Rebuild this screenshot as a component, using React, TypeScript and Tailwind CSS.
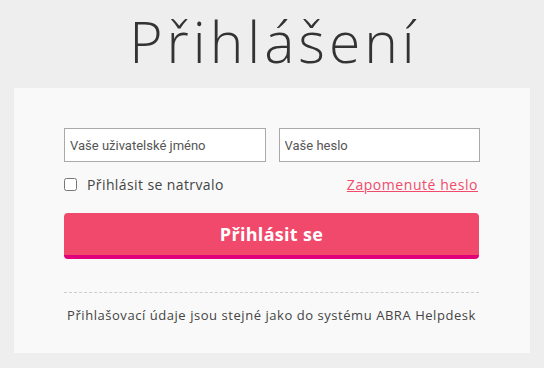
import { useState } from 'react';

export default function App() {
  const [remember, setRemember] = useState(false);

  return (
    <div className="min-h-screen w-full bg-[#eeeeee] font-['Open_Sans',sans-serif]">
      <h1 className="h-[88px] pt-[6px] pl-[4px] text-center text-[57px] font-light leading-[70px] tracking-[4px] text-[#333333]">
        Přihlášení
      </h1>

      <div className="mx-[14px] h-[265px] bg-[#f9f9f9] px-[50px] pt-[40px]">
        <div className="flex gap-[13px]">
          <input
            type="text"
            placeholder="Vaše uživatelské jméno"
            className="h-[34px] w-[202px] border border-[#a9a9a9] bg-white px-[5px] font-['Roboto',sans-serif] text-[13px] text-[#333] placeholder:text-[#555555] outline-none"
          />
          <input
            type="password"
            placeholder="Vaše heslo"
            className="h-[34px] w-[202px] border border-[#a9a9a9] bg-white px-[5px] font-['Roboto',sans-serif] text-[13px] text-[#333] placeholder:text-[#555555] outline-none"
          />
        </div>

        <div className="mt-[12px] flex items-center justify-between pr-[2px]">
          <label className="flex items-center gap-[10px] text-[14px] tracking-[0.4px] text-[#444444]">
            <input
              type="checkbox"
              checked={remember}
              onChange={(e) => setRemember(e.target.checked)}
              className="h-[13px] w-[13px]"
            />
            Přihlásit se natrvalo
          </label>
          <a href="#" className="text-[14px] tracking-[0.55px] text-[#f04b6b] underline">
            Zapomenuté heslo
          </a>
        </div>

        <button className="mt-[18px] h-[46px] w-[415px] rounded-[4px] border-b-[4px] border-[#e0007a] bg-[#f0496b] text-[18px] font-bold tracking-[0.3px] text-white">
          Přihlásit se
        </button>

        <div className="mt-[33px] w-[415px] border-t border-dashed border-[#cccccc]" />

        <p className="mt-[13px] w-[415px] text-center text-[13px] tracking-[0.55px] text-[#444444]">
          Přihlašovací údaje jsou stejné jako do systému ABRA Helpdesk
        </p>
      </div>
    </div>
  );
}
